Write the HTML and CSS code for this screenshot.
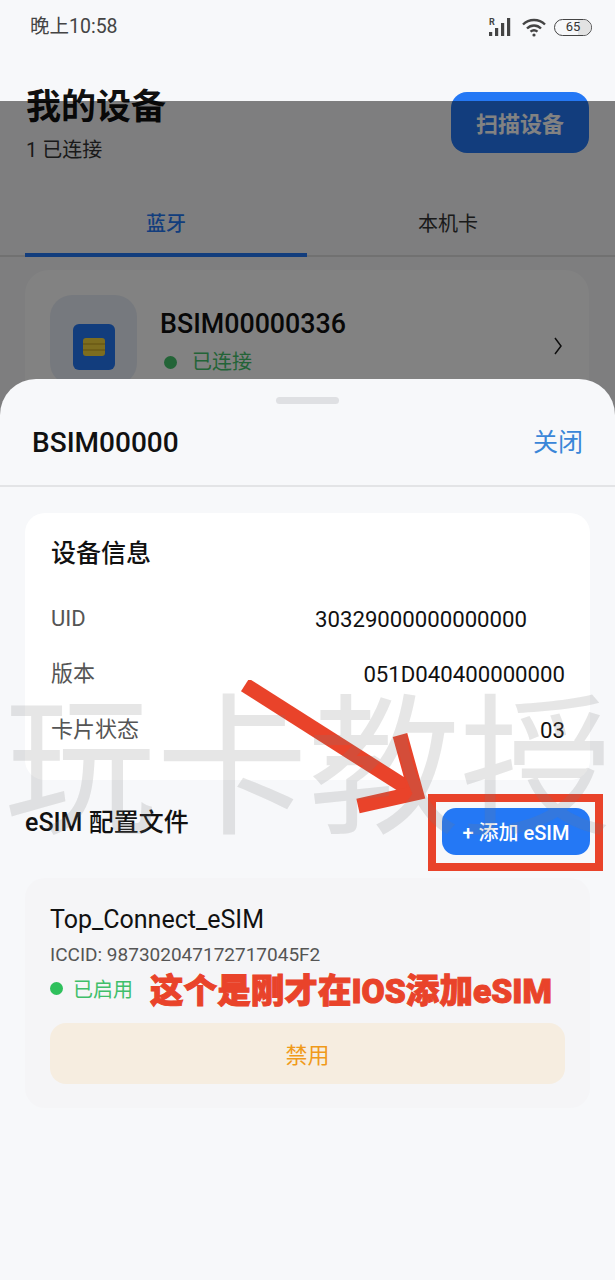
FILE: index.html
```html
<!DOCTYPE html>
<html lang="zh-CN">

<head>
    <meta charset="UTF-8">
    <meta name="viewport" content="width=device-width, initial-scale=1.0">
    <title>我的设备</title>
    <link rel="stylesheet" href="styles.css">
</head>

<body>
    <div class="phone">
        <div class="status-bar">
            <span class="time">晚上10:58</span>
            <div class="status-icons">
                <svg width="26" height="20" viewBox="0 0 26 20">
                    <text x="1" y="7.5" class="r-mark">R</text>
                    <rect x="1" y="15" width="3.2" height="4" fill="#444"/>
                    <rect x="7" y="11" width="3.2" height="8" fill="#444"/>
                    <rect x="13" y="6" width="3.2" height="13" fill="#444"/>
                    <rect x="19" y="1" width="3.2" height="18" fill="#444"/>
                </svg>
                <svg width="26" height="20" viewBox="0 0 26 20" fill="none" stroke="#444" stroke-width="2.4">
                    <path d="M2 7.5C8 1.5 18 1.5 24 7.5"/>
                    <path d="M6 11.5C10 7.5 16 7.5 20 11.5"/>
                    <path d="M9.5 14.6C11.5 13 14.5 13 16.5 14.6"/>
                    <circle cx="13" cy="18" r="1.6" fill="#444" stroke="none"/>
                </svg>
                <div class="battery"><span class="battery-fill"></span><span class="battery-num">65</span></div>
            </div>
        </div>

        <div class="page-header">
            <div>
                <h1>我的设备</h1>
                <p class="sub">1 已连接</p>
            </div>
            <button class="scan-btn">扫描设备</button>
        </div>

        <div class="tabs">
            <div class="tab tab-active">蓝牙</div>
            <div class="tab">本机卡</div>
        </div>

        <div class="device-card">
            <div class="device-icon">
                <div class="sim"><span class="sim-chip"></span></div>
            </div>
            <div class="device-text">
                <div class="device-name">BSIM00000336</div>
                <div class="device-status"><span class="dot"></span>已连接</div>
            </div>
            <svg class="chevron" width="10" height="18" viewBox="0 0 10 18" fill="none" stroke="#1c1c1c" stroke-width="1.5">
                <path d="M2 1L8 9L2 17"/>
            </svg>
        </div>

        <div class="overlay"></div>

        <div class="sheet">
            <div class="handle"></div>
            <div class="sheet-header">
                <span class="sheet-title">BSIM00000</span>
                <span class="sheet-close">关闭</span>
            </div>

            <div class="info-card">
                <h3>设备信息</h3>
                <div class="info-row"><span>UID</span><b class="uid">30329000000000000</b></div>
                <div class="info-row"><span>版本</span><b>051D040400000000</b></div>
                <div class="info-row"><span>卡片状态</span><b>03</b></div>
            </div>

            <div class="esim-head">
                <span class="esim-title">eSIM 配置文件</span>
                <button class="add-btn">+ 添加 eSIM</button>
            </div>

            <div class="profile-card">
                <div class="profile-name">Top_Connect_eSIM</div>
                <div class="iccid">ICCID: 987302047172717045F2</div>
                <div class="profile-status"><span class="dot dot-on"></span>已启用<span class="note">这个是刚才在IOS添加eSIM</span></div>
                <button class="disable-btn">禁用</button>
            </div>
        </div>

        <!-- 标注和水印 -->
        <svg class="arrow" width="200" height="140" viewBox="0 0 200 140" fill="none" stroke="#e9432a" stroke-width="15">
            <path d="M5 5L172 111"/>
            <path d="M160 55L176 113L118 126"/>
        </svg>
        <div class="red-box"></div>
        <div class="watermark">玩卡教授</div>
    </div>
</body>

</html>
```

FILE: styles.css
```css
* {
    box-sizing: border-box;
}

body {
    margin: 0;
    font-family: Roboto, "Noto Sans CJK SC", sans-serif;
    color: #111;
    background-color: #f7f8fa;
}

h1, h3, p {
    margin: 0;
    font-weight: normal;
}

button {
    border: none;
    font-family: inherit;
}

.phone {
    position: relative;
    width: 615px;
    height: 1280px;
    overflow: hidden;
    background-color: #f7f8fa;
}

.status-bar {
    height: 88px;
    padding: 12px 23px 0 30px;
    display: flex;
    justify-content: space-between;
    align-items: flex-start;
}

.time {
    font-size: 19.5px;
    line-height: 30px;
    color: #444;
}

.status-icons {
    display: flex;
    align-items: center;
    gap: 7px;
    height: 30px;
}

.r-mark {
    font-size: 9px;
    font-weight: bold;
    fill: #444;
}

.battery {
    position: relative;
    width: 38px;
    height: 17px;
    border: 1.5px solid #444;
    border-radius: 9px;
    overflow: hidden;
    text-align: center;
}

.battery-fill {
    position: absolute;
    right: 0;
    top: 0;
    bottom: 0;
    width: 35%;
    background-color: #e2e2e2;
}

.battery-num {
    position: relative;
    font-size: 13px;
    line-height: 14px;
    display: block;
    color: #333;
}

.page-header {
    padding: 0 26px;
    display: flex;
    justify-content: space-between;
    align-items: flex-start;
}

h1 {
    font-size: 35px;
    line-height: 36px;
    font-weight: bold;
    margin-top: 2px;
}

.sub {
    margin-top: 10px;
    font-size: 20px;
    line-height: 28px;
    color: #333;
}

.scan-btn {
    margin-top: 4px;
    width: 138px;
    height: 61px;
    padding-bottom: 3px;
    border-radius: 16px;
    background-color: #2478f5;
    color: #fff;
    font-size: 22px;
    font-weight: bold;
}

.tabs {
    margin-top: 36px;
    height: 57px;
    padding: 0 25px;
    display: flex;
    border-bottom: 2px solid #ddd;
}

.tab {
    width: 282px;
    height: 57px;
    padding-top: 9px;
    font-size: 20px;
    line-height: 30px;
    text-align: center;
    color: #333;
}

.tab-active {
    color: #2478f5;
    font-weight: 500;
    border-bottom: 4px solid #2478f5;
}

.device-card {
    margin: 13px 26px 0 25px;
    height: 150px;
    padding: 25px 26px 0 25px;
    display: flex;
    align-items: flex-start;
    border-radius: 24px;
    background-color: #fff;
}

.device-icon {
    width: 87px;
    height: 90px;
    border-radius: 22px;
    background-color: #e8eef7;
    display: flex;
    justify-content: center;
    padding-top: 29px;
}

.sim {
    width: 42px;
    height: 46px;
    border-radius: 6px;
    background-color: #2478f5;
    display: flex;
    align-items: center;
    justify-content: center;
}

.sim-chip {
    width: 22px;
    height: 18px;
    border-radius: 3px;
    background: linear-gradient(#f5d63d 30%, #d9b92e 30%, #d9b92e 40%, #f5d63d 40%, #f5d63d 60%, #d9b92e 60%, #d9b92e 70%, #f5d63d 70%);
}

.device-text {
    margin-left: 23px;
    flex: 1;
}

.device-name {
    font-size: 26.8px;
    font-weight: 500;
    line-height: 34px;
    margin-top: 12px;
}

.device-status {
    display: flex;
    align-items: center;
    margin-top: 6px;
    font-size: 20px;
    line-height: 30px;
    color: #46c46c;
}

.dot {
    width: 13px;
    height: 13px;
    margin: 0 15px 0 4px;
    border-radius: 50%;
    background-color: #46c46c;
}

.chevron {
    margin-top: 42px;
}

.overlay {
    position: absolute;
    left: 0;
    right: 0;
    top: 101px;
    bottom: 0;
    background-color: rgba(0, 0, 0, 0.49);
}

.sheet {
    position: absolute;
    left: 0;
    right: 0;
    top: 379px;
    bottom: 0;
    border-radius: 36px 36px 0 0;
    background-color: #f7f8fa;
}

.handle {
    width: 63px;
    height: 7px;
    margin: 18px auto 0;
    border-radius: 4px;
    background-color: #dfe0e3;
}

.sheet-header {
    height: 83px;
    padding: 0 32px 5px;
    display: flex;
    justify-content: space-between;
    align-items: center;
    border-bottom: 2px solid #e3e4e6;
}

.sheet-title {
    font-size: 28px;
    font-weight: 500;
}

.sheet-close {
    margin-bottom: 4px;
    font-size: 25px;
    color: #3a86d8;
}

.info-card {
    margin: 26px 25px 0;
    height: 267px;
    padding: 23px 25px 0 26px;
    border-radius: 20px;
    background-color: #fff;
}

h3 {
    font-size: 25px;
    line-height: 36px;
    font-weight: 500;
    margin-bottom: 19px;
}

.info-row {
    display: flex;
    justify-content: space-between;
    align-items: center;
    height: 55.5px;
    font-size: 22px;
    line-height: 30px;
    color: #555;
}

.info-row span, .info-row b {
    display: block;
    height: 30px;
}

.info-row b {
    font-size: 22.2px;
    font-weight: normal;
    color: #111;
}

.uid {
    margin-right: 38px;
}

.esim-head {
    height: 98px;
    padding: 0 25px;
    display: flex;
    justify-content: space-between;
    align-items: flex-start;
}

.esim-title {
    margin-top: 26px;
    font-size: 25px;
    font-weight: 500;
    line-height: 34px;
}

.add-btn {
    margin-top: 28px;
    width: 148px;
    height: 47px;
    border-radius: 14px;
    background-color: #2478f5;
    color: #fff;
    font-size: 20px;
    font-weight: 500;
}

.profile-card {
    margin: 0 25px;
    height: 230px;
    padding: 25px 25px 0;
    border-radius: 20px;
    background-color: #f5f5f7;
}

.profile-name {
    font-size: 25px;
    line-height: 34px;
}

.iccid {
    margin-top: 6px;
    font-size: 19px;
    line-height: 24px;
    color: #555;
}

.profile-status {
    display: flex;
    align-items: center;
    margin-top: 2px;
    height: 38px;
    font-size: 20px;
    color: #3fbf6a;
}

.dot-on {
    margin: 0 10px 0 0;
    background-color: #2fc05c;
}

.note {
    margin-left: 17px;
    font-size: 33.6px;
    font-weight: 900;
    color: #e9432a;
    -webkit-text-stroke: 1px #e9432a;
}

.disable-btn {
    display: block;
    width: 515px;
    height: 61px;
    padding-bottom: 3px;
    margin-top: 16px;
    border-radius: 16px;
    background-color: #f6ede0;
    color: #f09a1a;
    font-size: 22px;
}

.watermark {
    position: absolute;
    left: 4px;
    top: 651px;
    width: 611px;
    font-family: "Noto Sans CJK SC", sans-serif;
    font-size: 152px;
    line-height: 210px;
    font-weight: 400;
    white-space: nowrap;
    color: rgba(120, 120, 120, 0.19);
}

.arrow {
    position: absolute;
    left: 240px;
    top: 680px;
}

.red-box {
    position: absolute;
    left: 428px;
    top: 794px;
    width: 175px;
    height: 77px;
    border: 8px solid #e9432a;
}
```
